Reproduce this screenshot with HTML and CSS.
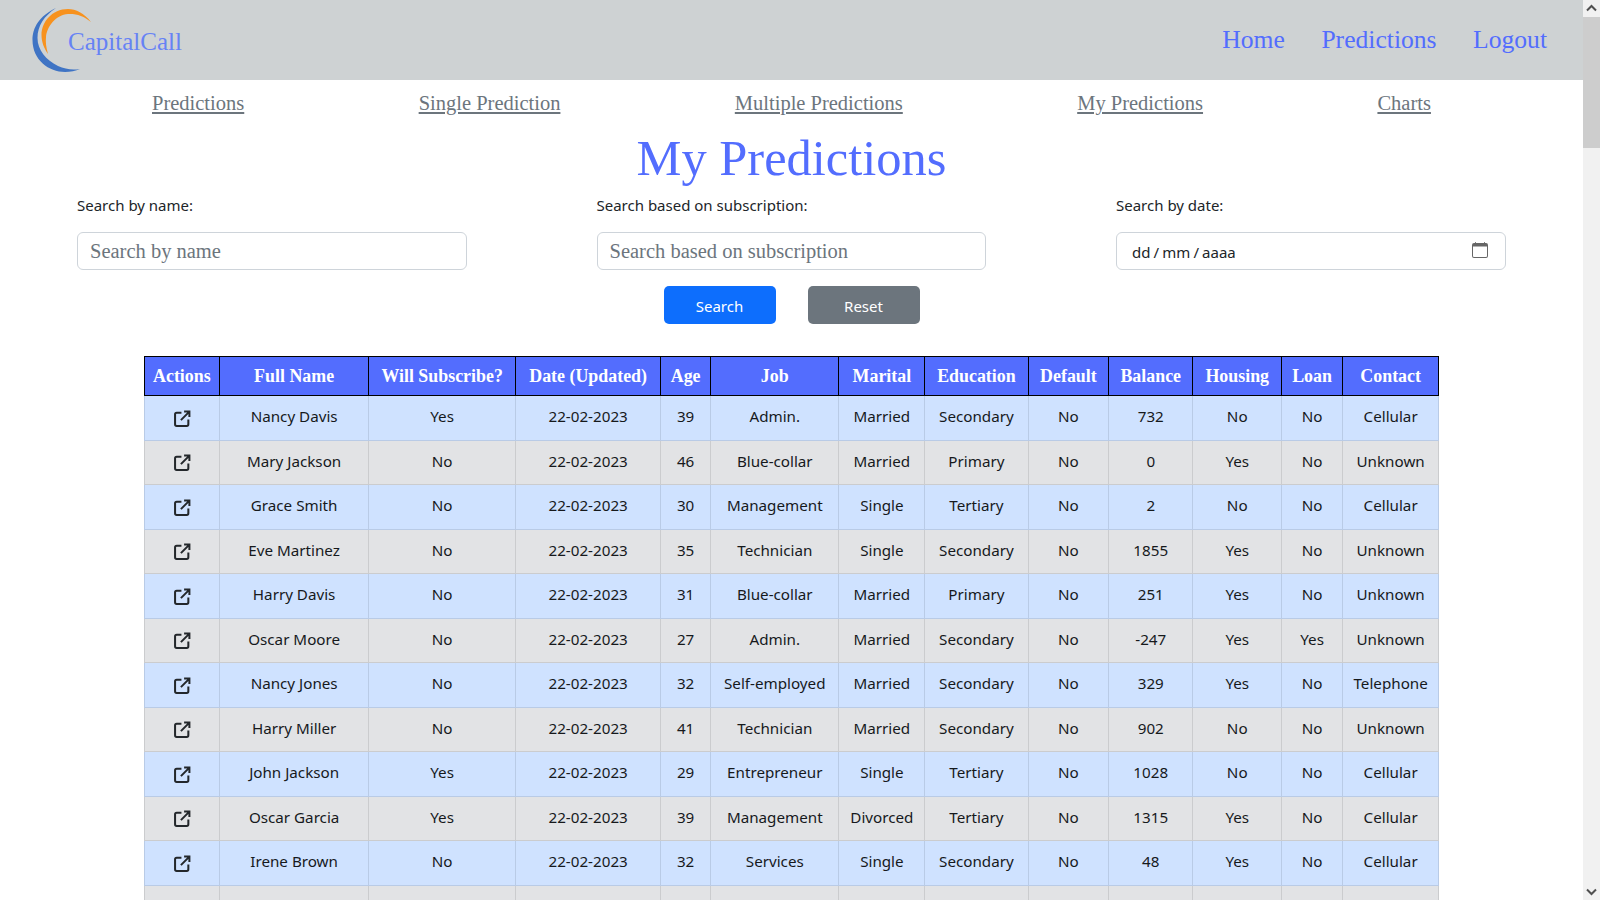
FILE: index.html
```html
<!DOCTYPE html>
<html lang="en">
<head>
<meta charset="utf-8">
<title>My Predictions</title>
<link rel="stylesheet" href="styles.css">
</head>
<body>
<header class="topbar">
  <a class="brand" href="#">
    <svg class="brand-logo" viewBox="30 5 62 70" width="62" height="70" aria-hidden="true">
      <path class="arc-blue" d="M56 8C39 16 32.500 28 32.500 40C32.500 60 49 72 65 72C70 72 76 71 80 69C72 70.500 65 69 58 66C46 60 37.500 50 37.500 38C37.500 26 44 16 56 8Z"/>
      <path class="arc-orange" d="M91 22C84 13 76 9 68 9C52 9 41.500 22 41.500 35C41.500 42 44 48 48 54C46 47 45.500 42 46 37C47 26 56 15 68 14C76 13.500 84 16 91 22Z"/>
    </svg>
    <span class="brand-name">CapitalCall</span>
  </a>
  <nav class="topnav">
    <a href="#">Home</a>
    <a href="#">Predictions</a>
    <a href="#">Logout</a>
  </nav>
</header>
<main class="page">
  <nav class="subnav">
    <a href="#">Predictions</a>
    <a href="#">Single Prediction</a>
    <a href="#">Multiple Predictions</a>
    <a href="#">My Predictions</a>
    <a href="#">Charts</a>
  </nav>
  <h1 class="title">My Predictions</h1>
  <form class="filters">
    <div class="field">
      <label for="f-name">Search by name:</label>
      <input id="f-name" class="control" type="text" placeholder="Search by name">
    </div>
    <div class="field">
      <label for="f-sub">Search based on subscription:</label>
      <input id="f-sub" class="control" type="text" placeholder="Search based on subscription">
    </div>
    <div class="field">
      <label>Search by date:</label>
      <div class="control date-control">
        <span>dd / mm / aaaa</span>
        <svg class="cal" viewBox="0 0 16 16" width="16" height="16" aria-hidden="true">
          <path d="M3.500 0a.5.5 0 0 1 .5.5V1h8V.5a.5.5 0 0 1 1 0V1h1a2 2 0 0 1 2 2v11a2 2 0 0 1-2 2H2a2 2 0 0 1-2-2V3a2 2 0 0 1 2-2h1V.5a.5.5 0 0 1 .5-.5zM1 4.500V14a1 1 0 0 0 1 1h12a1 1 0 0 0 1-1V4.500H1z"/>
        </svg>
      </div>
    </div>
  </form>
  <div class="actions">
    <button type="button" class="btn btn-search">Search</button>
    <button type="button" class="btn btn-reset">Reset</button>
  </div>
  <table class="grid">
    <colgroup>
      <col class="c1"><col class="c2"><col class="c3"><col class="c4"><col class="c5"><col class="c6"><col class="c7"><col class="c8"><col class="c9"><col class="c10"><col class="c11"><col class="c12"><col class="c13">
    </colgroup>
    <thead>
      <tr><th>Actions</th><th>Full Name</th><th>Will Subscribe?</th><th>Date (Updated)</th><th>Age</th><th>Job</th><th>Marital</th><th>Education</th><th>Default</th><th>Balance</th><th>Housing</th><th>Loan</th><th>Contact</th></tr>
    </thead>
    <tbody>
      <tr><td><svg class="open" viewBox="0 0 16 16"><use href="#ico"/></svg></td><td>Nancy Davis</td><td>Yes</td><td>22-02-2023</td><td>39</td><td>Admin.</td><td>Married</td><td>Secondary</td><td>No</td><td>732</td><td>No</td><td>No</td><td>Cellular</td></tr>
      <tr><td><svg class="open" viewBox="0 0 16 16"><use href="#ico"/></svg></td><td>Mary Jackson</td><td>No</td><td>22-02-2023</td><td>46</td><td>Blue-collar</td><td>Married</td><td>Primary</td><td>No</td><td>0</td><td>Yes</td><td>No</td><td>Unknown</td></tr>
      <tr><td><svg class="open" viewBox="0 0 16 16"><use href="#ico"/></svg></td><td>Grace Smith</td><td>No</td><td>22-02-2023</td><td>30</td><td>Management</td><td>Single</td><td>Tertiary</td><td>No</td><td>2</td><td>No</td><td>No</td><td>Cellular</td></tr>
      <tr><td><svg class="open" viewBox="0 0 16 16"><use href="#ico"/></svg></td><td>Eve Martinez</td><td>No</td><td>22-02-2023</td><td>35</td><td>Technician</td><td>Single</td><td>Secondary</td><td>No</td><td>1855</td><td>Yes</td><td>No</td><td>Unknown</td></tr>
      <tr><td><svg class="open" viewBox="0 0 16 16"><use href="#ico"/></svg></td><td>Harry Davis</td><td>No</td><td>22-02-2023</td><td>31</td><td>Blue-collar</td><td>Married</td><td>Primary</td><td>No</td><td>251</td><td>Yes</td><td>No</td><td>Unknown</td></tr>
      <tr><td><svg class="open" viewBox="0 0 16 16"><use href="#ico"/></svg></td><td>Oscar Moore</td><td>No</td><td>22-02-2023</td><td>27</td><td>Admin.</td><td>Married</td><td>Secondary</td><td>No</td><td>-247</td><td>Yes</td><td>Yes</td><td>Unknown</td></tr>
      <tr><td><svg class="open" viewBox="0 0 16 16"><use href="#ico"/></svg></td><td>Nancy Jones</td><td>No</td><td>22-02-2023</td><td>32</td><td>Self-employed</td><td>Married</td><td>Secondary</td><td>No</td><td>329</td><td>Yes</td><td>No</td><td>Telephone</td></tr>
      <tr><td><svg class="open" viewBox="0 0 16 16"><use href="#ico"/></svg></td><td>Harry Miller</td><td>No</td><td>22-02-2023</td><td>41</td><td>Technician</td><td>Married</td><td>Secondary</td><td>No</td><td>902</td><td>No</td><td>No</td><td>Unknown</td></tr>
      <tr><td><svg class="open" viewBox="0 0 16 16"><use href="#ico"/></svg></td><td>John Jackson</td><td>Yes</td><td>22-02-2023</td><td>29</td><td>Entrepreneur</td><td>Single</td><td>Tertiary</td><td>No</td><td>1028</td><td>No</td><td>No</td><td>Cellular</td></tr>
      <tr><td><svg class="open" viewBox="0 0 16 16"><use href="#ico"/></svg></td><td>Oscar Garcia</td><td>Yes</td><td>22-02-2023</td><td>39</td><td>Management</td><td>Divorced</td><td>Tertiary</td><td>No</td><td>1315</td><td>Yes</td><td>No</td><td>Cellular</td></tr>
      <tr><td><svg class="open" viewBox="0 0 16 16"><use href="#ico"/></svg></td><td>Irene Brown</td><td>No</td><td>22-02-2023</td><td>32</td><td>Services</td><td>Single</td><td>Secondary</td><td>No</td><td>48</td><td>Yes</td><td>No</td><td>Cellular</td></tr>
      <tr><td></td><td></td><td></td><td></td><td></td><td></td><td></td><td></td><td></td><td></td><td></td><td></td><td></td></tr>
    </tbody>
  </table>
</main>
<div class="scrollbar" aria-hidden="true">
  <svg class="sb-arrow" viewBox="0 0 17 17" width="17" height="17"><path d="M4 10.500l4.500-4.500 4.500 4.500"/></svg>
  <div class="sb-track"><div class="sb-thumb"></div></div>
  <svg class="sb-arrow" viewBox="0 0 17 17" width="17" height="17"><path d="M4 6.500l4.500 4.500 4.500-4.500"/></svg>
</div>
<svg class="defs" aria-hidden="true">
  <symbol id="ico" viewBox="0 0 16 16">
    <path d="M7 2.500H2.500A1.500 1.500 0 0 0 1 4v9.500A1.500 1.500 0 0 0 2.500 15H12a1.500 1.500 0 0 0 1.500-1.500V9" fill="none" stroke="currentColor" stroke-width="1.900"/>
    <path d="M6.500 9.500 14 2M9.500 1.500H14.500V6.500" fill="none" stroke="currentColor" stroke-width="1.900"/>
  </symbol>
</svg>
</body>
</html>
```
FILE: styles.css
```css
* { box-sizing: border-box; }
body { margin: 0; padding-right: 17px; background: #fff; color: #212529; font-family: "Noto Sans", "Liberation Sans", sans-serif; font-size: 15px; }
a { color: inherit; }

.defs { display: none; }

.scrollbar { position: fixed; top: 0; right: 0; bottom: 0; width: 17px; background: #f1f1f1; display: flex; flex-direction: column; }
.sb-arrow { display: block; flex: none; fill: none; stroke: #505050; stroke-width: 2; }
.sb-track { flex: 1; }
.sb-thumb { height: 131px; background: #cdcdcd; }

.topbar { height: 80px; background: #ced2d3; display: flex; align-items: center; justify-content: space-between; padding: 0 36px 0 30px; font-family: "Liberation Serif", serif; color: #536dfe; }
.brand { display: flex; align-items: center; text-decoration: none; }
.brand-logo { display: block; }
.arc-blue { fill: #3f74c4; }
.arc-orange { fill: #f7921e; }
.brand-name { font-size: 25px; margin-left: -24px; margin-top: 4px; color: #6682f5; }
.topnav { display: flex; gap: 36.500px; font-size: 25.600px; margin-top: -1px; }
.topnav a { text-decoration: none; }

.subnav { display: flex; justify-content: space-between; padding: 11px 152px 0; font-family: "Liberation Serif", serif; font-size: 20.500px; line-height: 24px; color: #6c757d; }

.title { margin: 13px 0 0; text-align: center; font-family: "Liberation Serif", serif; font-weight: 400; font-size: 50.500px; line-height: 60px; color: #536dfe; }

.filters { display: grid; grid-template-columns: repeat(3, 389.500px); column-gap: 130px; padding: 0 77px; margin-top: 5px; }
.field { display: flex; flex-direction: column; }
.field label { line-height: 24px; height: 24px; margin-bottom: 15px; }
.control { height: 38px; width: 100%; border: 1px solid #ced4da; border-radius: 6px; background: #fff; padding: 0 12px; font-family: "Liberation Serif", serif; font-size: 20.500px; color: #212529; outline: 0; }
.control::placeholder { color: #6c757d; opacity: 1; }
.date-control { display: flex; align-items: center; justify-content: space-between; padding: 0 17px 0 15px; font-family: "Noto Sans", sans-serif; font-size: 15px; word-spacing: -0.800px; }
.date-control span { margin-top: 2px; }
.cal { fill: #666; display: block; margin-top: -2px; }

.actions { display: flex; justify-content: center; gap: 32px; margin-top: 16px; }
.btn { width: 112px; height: 38px; padding: 1px 0 0; border: 0; border-radius: 5px; color: #fff; font-family: "Noto Sans", sans-serif; font-size: 15px; }
.btn-search { background: #0d6efd; }
.btn-reset { background: #6c757d; }

.grid { width: 1294.500px; margin: 32px auto 0; table-layout: fixed; border-collapse: collapse; text-align: center; color: #16191c; font-size: 15.200px; }
.c1 { width: 75.500px; } .c2 { width: 149px; } .c3 { width: 147px; } .c4 { width: 145px; } .c5 { width: 50px; } .c6 { width: 128.300px; } .c7 { width: 85.900px; } .c8 { width: 103.200px; } .c9 { width: 80.800px; } .c10 { width: 83.900px; } .c11 { width: 89.100px; } .c12 { width: 60.600px; } .c13 { width: 96.500px; }
.grid th { height: 39px; padding: 0; background: #536dfe; color: #fff; border: 1px solid #000; font-family: "Liberation Serif", serif; font-weight: 700; font-size: 17.900px; }
.grid td { height: 44.500px; padding: 0 0 3px; border: 1px solid #b9cbe6; background: #cfe2ff; }
.grid td:first-child { padding-left: 2px; }
.grid tbody tr:nth-child(even) td { background: #e2e3e5; border-color: #cbccce; }
.open { display: block; width: 17px; height: 17px; margin: 4px auto 0; color: #23272b; }
```
